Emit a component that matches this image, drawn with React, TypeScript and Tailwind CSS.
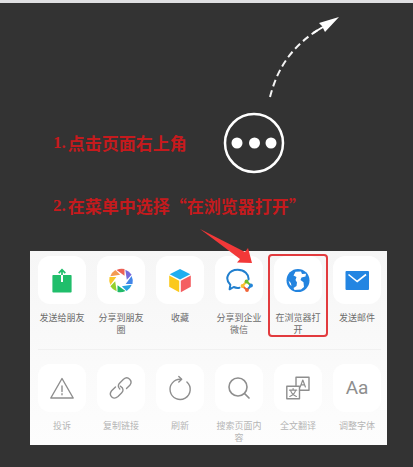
import type { ReactNode } from 'react';

type Item = { label: string; icon: ReactNode; highlighted?: boolean };

const outline = {
  fill: 'none',
  stroke: '#8e8e8e',
  strokeWidth: 1.4,
  strokeLinejoin: 'round' as const,
  strokeLinecap: 'round' as const,
};

const petals = ['#ed6055', '#7468dc', '#4285e8', '#28a3e0', '#20b968', '#94d02c', '#f9c82b', '#f39a51'];

function Icon({ children }: { children: ReactNode }) {
  return (
    <svg viewBox="0 0 28 28" className="size-7" aria-hidden="true">
      {children}
    </svg>
  );
}

const shareItems: Item[] = [
  {
    label: '发送给朋友',
    icon: (
      <Icon>
        <path d="M5.200 9h17.600q.8 0 .8.800v15.900q0 .8-.8.800H5.200q-.8 0-.8-.800V9.800q0-.8.800-.8Z" fill="#20be6b" />
        <path d="M14 9v7" stroke="#fff" strokeWidth="2" />
        <path d="M14 9V4M10.700 7.200 14 3.700 17.300 7.200" fill="none" stroke="#20be6b" strokeWidth="1.700" />
      </Icon>
    ),
  },
  {
    label: '分享到朋友圈',
    icon: (
      <Icon>
        {petals.map((color, i) => (
          <path key={color} d="M9.500 3.900Q13.500 2 17.500 3V9.800Z" fill={color} transform={`rotate(${i * 45} 14 14.500)`} />
        ))}
      </Icon>
    ),
  },
  {
    label: '收藏',
    icon: (
      <Icon>
        <path d="M14 3 24.300 8.200 14 13.500 3.700 8.200Z" fill="#20aef0" />
        <path d="M3.200 9.600 13.200 14.800V26.300L3.200 20.800Z" fill="#fbc91c" />
        <path d="M14.800 14.800 24.800 9.600V20.800L14.800 26.300Z" fill="#f45e61" />
      </Icon>
    ),
  },
  {
    label: '分享到企业微信',
    icon: (
      <Icon>
        <path
          d="M14.500 21.700Q11.500 22.300 8.700 21L4.600 23.300 5.300 18.800C-1 12.500 3.500 3.800 12.700 3.800 19.500 3.800 24 8.300 23.500 13.500"
          fill="none"
          stroke="#217fce"
          strokeWidth="2"
          strokeLinejoin="round"
          strokeLinecap="round"
        />
        <g fill="none" strokeWidth="2">
          <path d="m21.500 15.500 4.500 4" stroke="#70bd2c" />
          <path d="m26 19.500-4 4.500" stroke="#2485d8" />
          <path d="m22 24-4.500-4" stroke="#f26337" />
          <path d="m17.500 20 4-4.500" stroke="#f7bf30" />
        </g>
        <circle cx="21.500" cy="15.500" r="1.900" fill="#70bd2c" />
        <circle cx="26" cy="19.500" r="1.900" fill="#2485d8" />
        <circle cx="22" cy="24" r="1.900" fill="#f26337" />
        <circle cx="17.500" cy="20" r="1.900" fill="#f7bf30" />
      </Icon>
    ),
  },
  {
    label: '在浏览器打开',
    highlighted: true,
    icon: (
      <Icon>
        <circle cx="14" cy="14.500" r="11.500" fill="#2384df" />
        <path
          d="M11.500 5.700 17 5.500 18 8 22 7.800 21.500 10.500 17.500 11.500 16.500 14 19.500 16.200 20 21 17 23.500 10.500 24 9.500 22 12.500 20 13 16.500 11.500 14 12.500 11 9.500 9.500ZM4.500 14.500 6.800 17 7.500 20 5.800 18.500Z"
          fill="#fff"
        />
      </Icon>
    ),
  },
  {
    label: '发送邮件',
    icon: (
      <Icon>
        <rect x="2.500" y="5" width="23.500" height="19" rx="1" fill="#2385e2" />
        <path d="m5.500 8.500 8.700 7L23 8.500" fill="none" stroke="#fff" strokeWidth="1.600" />
      </Icon>
    ),
  },
];

const toolItems: Item[] = [
  {
    label: '投诉',
    icon: (
      <Icon>
        <path d="M14 4.500 25.200 24H2.800Z" {...outline} />
        <path d="M14 12v5.500m0 2.200v1" {...outline} />
      </Icon>
    ),
  },
  {
    label: '复制链接',
    icon: (
      <Icon>
        <path d="M12.800 15C9.500 12 12.300 9.500 13.500 8.200L16.500 5.300C21 1.500 26.300 6.800 22.800 11.200L19.500 14.500" {...outline} />
        <path d="M13.300 12.200C17.500 14.500 16 17.500 14.500 19L11 22.500C6.500 26.500 1 21.500 4.600 16.800L8.500 13" {...outline} />
      </Icon>
    ),
  },
  {
    label: '刷新',
    icon: (
      <Icon>
        <path d="M20.900 7.900A10.100 10.100 0 1 1 14.800 5.300" {...outline} />
        <path d="M12.800 2.500 15.700 5.300 12.800 8" {...outline} />
      </Icon>
    ),
  },
  {
    label: '搜索页面内容',
    icon: (
      <Icon>
        <circle cx="13" cy="13" r="9" {...outline} strokeWidth={1.6} />
        <path d="m19.500 19.500 4.500 4.500" {...outline} strokeWidth={1.7} />
      </Icon>
    ),
  },
  {
    label: '全文翻译',
    icon: (
      <Icon>
        <path d="M12 11.800V3.300h13v13h-9.500" {...outline} />
        <path d="M2.800 12.200h12.700v12.600H2.800Z" {...outline} />
        <path d="m16.200 13 2.600-7 2.600 7m-4.300-2.200h3.500" {...outline} strokeWidth={1.2} />
        <path d="M5.500 16.200h7.200M9.100 14.500v1.700M11.600 16.200C11 19.500 8.500 21.500 5.800 22.500M6.600 16.200C7.200 19.500 9.700 21.500 12.400 22.500" {...outline} strokeWidth={1.2} />
      </Icon>
    ),
  },
  {
    label: '调整字体',
    icon: <span className="font-['Roboto','Noto_Sans_CJK_SC',sans-serif] text-[19px] text-[#8e8e8e]">Aa</span>,
  },
];

function ActionRow({ items, labelColor }: { items: Item[]; labelColor: string }) {
  return (
    <div className="grid grid-cols-6 justify-items-center gap-x-[11px]">
      {items.map((item) => (
        <button key={item.label} type="button" className="relative flex w-12 flex-col items-center gap-2">
          <span className="flex size-12 items-center justify-center rounded-xl bg-white">{item.icon}</span>
          <span className={`text-[9px] leading-3 ${labelColor}`}>{item.label}</span>
          {item.highlighted && (
            <span className="absolute -inset-x-1.5 -top-0.5 h-[83px] rounded border-2 border-[#e23b3e]" />
          )}
        </button>
      ))}
    </div>
  );
}

function Step({ number, children }: { number: number; children: ReactNode }) {
  return (
    <p className="flex items-center gap-0.5 text-[17px] leading-6 font-bold whitespace-nowrap text-[#c51a1d]">
      <span className="font-['Liberation_Serif','Noto_Sans_CJK_SC',serif]">{number}.</span>
      <span>{children}</span>
    </p>
  );
}

export default function App() {
  return (
    <main
      lang="zh-CN"
      className="min-h-screen border-t-3 border-[#e0e0e2] bg-[#333333] pb-[22px] font-['Noto_Sans_CJK_SC',sans-serif]"
    >
      <section className="pt-3 pr-[26px] pl-[53px]">
        <div className="flex justify-end pr-12">
          <svg viewBox="0 0 76 86" className="h-[86px] w-[76px]" aria-hidden="true">
            <path d="M7 82C14 55 27 32 58 13" fill="none" stroke="#f4f4f4" strokeWidth="2" strokeDasharray="7 4" />
            <path d="m50 18 10-6" stroke="#fff" strokeWidth="2" />
            <path d="M76 2 56 8l3 3 3 6Z" fill="#fff" />
          </svg>
        </div>
        <div className="mt-[11px] flex items-center justify-between">
          <Step number={1}>点击页面右上角</Step>
          <svg viewBox="0 0 62 62" className="mr-[102px] size-[62px]" aria-hidden="true">
            <circle cx="31" cy="31" r="29" fill="none" stroke="#fff" strokeWidth="2.500" />
            <circle cx="14" cy="31" r="5.500" fill="#fff" />
            <circle cx="31.500" cy="31" r="5.500" fill="#fff" />
            <circle cx="48" cy="31" r="5.500" fill="#fff" />
          </svg>
        </div>
        <div className="mt-5">
          <Step number={2}>在菜单中选择“在浏览器打开”</Step>
        </div>
      </section>

      <section className="relative mt-[33px] mr-[26px] ml-[30px] bg-linear-to-b from-[#f6f6f6] to-[#fdfdfd] pr-1.5 pl-2">
        <div className="h-[98px] pt-[5px]">
          <ActionRow items={shareItems} labelColor="text-[#6c6c6c]" />
        </div>
        <hr className="border-[#f1f1f1]" />
        <div className="pt-3.5 pb-px">
          <ActionRow items={toolItems} labelColor="text-[#b5b5b5]" />
        </div>
        <svg viewBox="0 0 54 36" className="absolute -top-[22px] right-[134px] h-9 w-[54px]" aria-hidden="true">
          <path d="M1 0 46 23 49 19 53 34 38 33.500 41 30Z" fill="#f23838" />
        </svg>
      </section>
    </main>
  );
}
